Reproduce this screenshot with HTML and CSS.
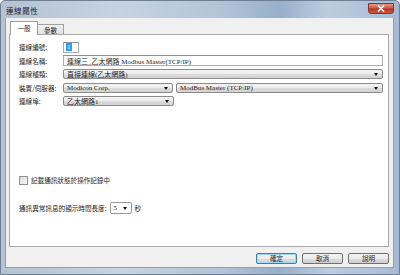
FILE: index.html
```html
<!DOCTYPE html>
<html lang="zh-Hant">
<head>
    <meta charset="UTF-8">
    <title>連線屬性</title>
    <link rel="stylesheet" href="styles.css">
</head>
<body>
    <div class="window">
        <div class="titlebar">
            <span class="title">連線屬性</span>
            <span class="close">
                <svg width="8" height="7" viewBox="0 0 8 7"><path d="M1 0.5 L7 6.5 M7 0.5 L1 6.5" stroke="#fff" stroke-width="1.6"/></svg>
            </span>
        </div>

        <div class="client">
            <div class="tabs">
                <span class="tab active">一般</span>
                <span class="tab">參數</span>
            </div>

            <div class="panel">
                <div class="form">
                    <div class="row">
                        <span class="label">連線編號:</span>
                        <span class="input num"><span class="hl">1</span></span>
                    </div>
                    <div class="row">
                        <span class="label">連線名稱:</span>
                        <span class="input grow">連線三_乙太網路 Modbus Master(TCP/IP)</span>
                    </div>
                    <div class="row">
                        <span class="label">連線種類:</span>
                        <span class="select grow">直接連線(乙太網路)</span>
                    </div>
                    <div class="row">
                        <span class="label">裝置/伺服器:</span>
                        <span class="select device">Modicon Corp.</span>
                        <span class="select grow">ModBus Master (TCP/IP)</span>
                    </div>
                    <div class="row">
                        <span class="label">連線埠:</span>
                        <span class="select port">乙太網路1</span>
                    </div>
                </div>

                <div class="check">
                    <span class="box"></span>
                    <span>記載通訊狀態於操作記錄中</span>
                </div>

                <div class="timeout">
                    <span>通訊異常訊息的顯示時間長度:</span>
                    <span class="select secs">5</span>
                    <span>秒</span>
                </div>
            </div>

            <div class="buttons">
                <span class="btn default">確定</span>
                <span class="btn">取消</span>
                <span class="btn">說明</span>
            </div>
        </div>
    </div>
</body>
</html>
```

FILE: styles.css
```css
body{
    margin: 0;
    background: #fff;
    font-family: "Noto Sans CJK TC", "Noto Sans", sans-serif;
    color: #1e1e1e;
}

.window{
    width: 400px;
    height: 275px;
    box-sizing: border-box;
    display: flex;
    flex-direction: column;
    background: linear-gradient(90deg, #b4c2d3 0%, #c6d3e2 30%, #b3c4d8 55%, #97afca 70%, #bccde0 82%, #a6bbd3 100%);
    border: 1px solid #6f7f93;
    border-radius: 5px 5px 0 0;
}

.titlebar{
    height: 17px;
    display: flex;
    justify-content: space-between;
    align-items: flex-start;
    padding: 0 5px 0 5px;

    .title{
        font-size: 7.5px;
        line-height: 19px;
        color: #1b2330;
        letter-spacing: 0.6px;
    }
    .close{
        width: 26px;
        height: 11px;
        margin-top: 2px;
        display: flex;
        justify-content: center;
        align-items: center;
        background: linear-gradient(#e39a8c 0%, #cf5a48 45%, #b8321f 55%, #cc5a3f 100%);
        border: 1px solid #7a3a33;
        border-radius: 0 0 3px 3px;
        box-sizing: border-box;
    }
}

.client{
    flex: 1;
    display: flex;
    flex-direction: column;
    margin: 0 5px 6px 4px;
    padding: 3px 4px 3px 3px;
    background: #f0f0f0;
    border: 1px solid #8da0b8;
    border-top: 0;
}

.tabs{
    height: 13px;
    display: flex;
    align-items: flex-end;
    padding-left: 1px;

    .tab{
        height: 10px;
        width: 26px;
        box-sizing: border-box;
        border: 1px solid #a0a0a0;
        border-bottom: 0;
        border-left: 0;
        background: linear-gradient(#f2f2f2, #e0e0e0);
        font-size: 6.6px;
        line-height: 10px;
        text-align: center;
    }
    .active{
        position: relative;
        height: 14px;
        width: 28px;
        margin-bottom: -1px;
        border-left: 1px solid #a0a0a0;
        background: #fff;
        line-height: 13px;
        z-index: 1;
    }
}

.panel{
    flex: 1;
    background: #fff;
    border: 1px solid #a9a9a9;
    padding: 7px 5px 0 9px;
    font-size: 6.6px;
}

.form{
    display: flex;
    flex-direction: column;
    gap: 3.5px;
}

.row{
    display: flex;
    align-items: center;
    height: 10px;
    gap: 3px;

    .label{
        width: 41px;
        line-height: 10px;
    }
}

.input, .select{
    box-sizing: border-box;
    height: 10px;
    display: flex;
    align-items: center;
    padding-left: 3px;
    font-family: "Liberation Serif", "Noto Sans CJK TC", serif;
    font-size: 7px;
    white-space: nowrap;
    overflow: hidden;
}

.input{
    border: 1px solid #abadb3;
    border-top-color: #8e929c;
    background: #fff;
    height: 11px;

    &.num{
        width: 16px;
        padding-left: 2px;
    }
    .hl{
        background: #3399ff;
        color: #fff;
        padding: 0 1px;
        line-height: 8px;
    }
}

.select{
    position: relative;
    border: 1px solid #8b8b8b;
    border-radius: 2px;
    background: linear-gradient(#f4f4f4 0%, #ebebeb 50%, #dddddd 50%, #d2d2d2 100%);
    padding-right: 12px;

    &::after{
        content: "";
        position: absolute;
        right: 4px;
        top: 3px;
        border-left: 2.5px solid transparent;
        border-right: 2.5px solid transparent;
        border-top: 3px solid #111;
    }
    &.device{
        width: 110px;
    }
    &.port{
        width: 111px;
    }
    &.secs{
        width: 22px;
        height: 12px;
        background: #fff;
        border-color: #999;
        &::after{
            top: 4px;
        }
    }
}

.grow{
    flex: 1;
}

.check{
    display: flex;
    align-items: center;
    gap: 3px;
    margin-top: 69px;
    height: 10px;

    .box{
        width: 7px;
        height: 7px;
        border: 1px solid #8f8f8f;
        background: linear-gradient(135deg, #dcdcdc, #f6f6f6);
    }
}

.timeout{
    display: flex;
    align-items: center;
    gap: 3px;
    margin-top: 17px;
    height: 12px;
}

.buttons{
    display: flex;
    justify-content: flex-end;
    gap: 5px;
    margin-top: 6px;

    .btn{
        width: 41px;
        height: 11px;
        box-sizing: border-box;
        border: 1px solid #707070;
        border-radius: 2px;
        background: linear-gradient(#f2f2f2 0%, #ebebeb 50%, #dddddd 50%, #cfcfcf 100%);
        font-size: 6.6px;
        line-height: 9px;
        text-align: center;
    }
    .default{
        border-color: #3c7fb1;
        box-shadow: inset 0 0 0 1px #9fd5f5;
    }
}
```
